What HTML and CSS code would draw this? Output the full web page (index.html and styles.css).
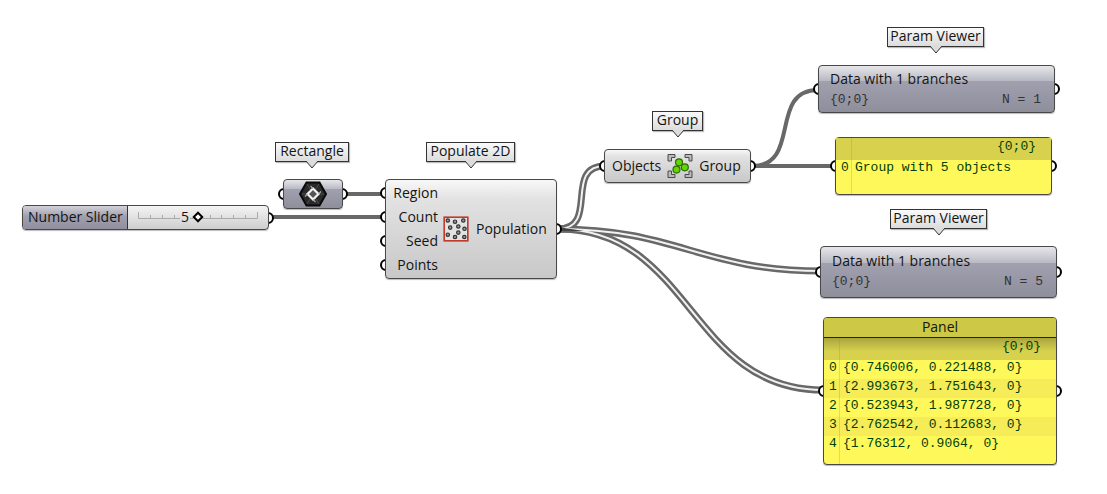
FILE: index.html
```html
<!DOCTYPE html>
<html lang="en">
<head>
<meta charset="utf-8">
<title>Populate 2D definition</title>
<link rel="stylesheet" href="styles.css">
</head>
<body>
<main class="canvas">
  <svg class="wires" aria-hidden="true">
    <g class="single">
      <path d="M344 194H384"/>
      <path d="M270 217H384"/>
      <path d="M752 166H834"/>
      <path d="M752 166C802 166 768 90 818 90"/>
    </g>
    <g class="double">
      <path d="M558 229C600 229 563 166 605 166"/>
      <path d="M558 229C676 229 703 271 821 271"/>
      <path d="M558 229C692 229 689 390 823 390"/>
      <path class="core" d="M558 229C600 229 563 166 605 166"/>
      <path class="core" d="M558 229C676 229 703 271 821 271"/>
      <path class="core" d="M558 229C692 229 689 390 823 390"/>
    </g>
    <path class="joint" d="M558 227L584 231L558 231Z"/>
  </svg>

  <div class="tag tag-rectangle">Rectangle<svg class="tip" viewBox="0 0 14 8"><path d="M1 0L7 7L13 0"/></svg></div>
  <div class="tag tag-populate">Populate 2D<svg class="tip" viewBox="0 0 14 8"><path d="M1 0L7 7L13 0"/></svg></div>
  <div class="tag tag-group">Group<svg class="tip" viewBox="0 0 14 8"><path d="M1 0L7 7L13 0"/></svg></div>
  <div class="tag tag-viewer-a">Param Viewer<svg class="tip" viewBox="0 0 14 8"><path d="M1 0L7 7L13 0"/></svg></div>
  <div class="tag tag-viewer-b">Param Viewer<svg class="tip" viewBox="0 0 14 8"><path d="M1 0L7 7L13 0"/></svg></div>

  <section class="node slider">
    <label class="slider-name" for="count">Number Slider</label>
    <div class="slider-body">
      <svg class="ticks" viewBox="0 0 120 8" preserveAspectRatio="none" aria-hidden="true"><path d="M0.500 1V7.500H119.500V1M12.500 4V7M24.500 4V7M36.500 4V7M72.500 4V7M83.500 4V7M95.500 4V7M107.500 4V7"/></svg>
      <output class="slider-value" for="count">5</output>
      <input id="count" type="range" min="0" max="10" value="5">
    </div>
    <i class="port out"></i>
  </section>

  <section class="node param rectangle">
    <i class="port in"></i>
    <svg width="28" height="26" viewBox="0 0 28 26" role="img" aria-label="Rectangle parameter">
      <path d="M7.500 1.500H20.500L27 13L20.500 24.500H7.500L1 13Z" fill="#2a2a2a" stroke="#0a0a0a" stroke-width="2"/>
      <path d="M8 3L20 23M20 3L8 23M3 13H25" stroke="#4c4c4c" stroke-width="1"/>
      <path d="M14 7.500L19.500 13L14 18.500L8.500 13Z" fill="#555" stroke="#f4f4f4" stroke-width="2.200"/>
      <path d="M14 7.500L11.500 5M14 18.500L16.500 21M19.500 13L22 10.500M8.500 13L6 15.500" stroke="#aaa" stroke-width="1.200"/>
    </svg>
    <i class="port out"></i>
  </section>

  <section class="node component populate">
    <ul class="inputs">
      <li><i class="port in"></i>Region</li>
      <li><i class="port in"></i>Count</li>
      <li><i class="port in"></i>Seed</li>
      <li><i class="port in"></i>Points</li>
    </ul>
    <svg width="26" height="26" viewBox="0 0 26 26" role="img" aria-label="Populate 2D">
      <rect x="2.500" y="2.500" width="23" height="23" fill="#0002"/>
      <rect x="1.200" y="1.200" width="23.600" height="23.600" fill="#e2e2e2" stroke="#c23a2c" stroke-width="1.600"/>
      <g fill="#999" stroke="#333" stroke-width="1.200">
        <circle cx="4.800" cy="4.500" r="1.700"/><circle cx="12" cy="5.700" r="1.700"/><circle cx="20.300" cy="4.500" r="1.700"/>
        <circle cx="7.200" cy="11.600" r="1.700"/><circle cx="15.300" cy="10.500" r="1.700"/><circle cx="21.500" cy="12.800" r="1.700"/>
        <circle cx="15.300" cy="16.600" r="1.700"/><circle cx="4.800" cy="18.700" r="1.700"/><circle cx="12" cy="21" r="1.700"/><circle cx="21.300" cy="21" r="1.700"/>
      </g>
    </svg>
    <span class="output">Population</span>
    <i class="port out"></i>
  </section>

  <section class="node component group">
    <i class="port in"></i>
    <span>Objects</span>
    <svg width="26" height="26" viewBox="0 0 26 26" role="img" aria-label="Group">
      <path d="M1 1.500H8V4.500H4.500V8H1ZM18 1.500H25V8H22V4.500H18ZM1 18H4.500V21.500H8V24.500H1ZM22 18H25V24.500H18V21.500H22Z" fill="#bbb" stroke="#4a4a4a"/>
      <g fill="#62d600" stroke="#2c6b08" stroke-width="1.200"><circle cx="12" cy="9.300" r="3.500"/><circle cx="17.800" cy="14.300" r="3.500"/><circle cx="9.500" cy="16.600" r="3.500"/></g>
    </svg>
    <span>Group</span>
    <i class="port out"></i>
  </section>

  <section class="node param viewer viewer-a">
    <i class="port in"></i>
    <p>Data with 1 branches</p>
    <p class="stats"><span>{0;0}</span><span>N = 1</span></p>
    <i class="port out"></i>
  </section>

  <section class="node panel panel-group">
    <i class="port in"></i>
    <table>
      <thead><tr><th></th><th>{0;0}</th></tr></thead>
      <tbody><tr><td>0</td><td>Group with 5 objects</td></tr></tbody>
    </table>
    <i class="port out"></i>
  </section>

  <section class="node param viewer viewer-b">
    <i class="port in"></i>
    <p>Data with 1 branches</p>
    <p class="stats"><span>{0;0}</span><span>N = 5</span></p>
    <i class="port out"></i>
  </section>

  <section class="node panel panel-points">
    <i class="port in"></i>
    <h2>Panel</h2>
    <table>
      <thead><tr><th></th><th>{0;0}</th></tr></thead>
      <tbody>
        <tr><td>0</td><td>{0.746006, 0.221488, 0}</td></tr>
        <tr><td>1</td><td>{2.993673, 1.751643, 0}</td></tr>
        <tr><td>2</td><td>{0.523943, 1.987728, 0}</td></tr>
        <tr><td>3</td><td>{2.762542, 0.112683, 0}</td></tr>
        <tr><td>4</td><td>{1.76312, 0.9064, 0}</td></tr>
      </tbody>
    </table>
    <i class="port out"></i>
  </section>
</main>
</body>
</html>
```

FILE: styles.css
```css
* { box-sizing: border-box; }

body {
  margin: 0;
  background: #fff;
  color: #141414;
  font: 14px/20px "Open Sans", "Noto Sans", sans-serif;
}

p, h2, ul { margin: 0; padding: 0; }

.canvas {
  position: relative;
  isolation: isolate;
  min-height: 100vh;
  overflow: hidden;
}

/* Wires */
.wires {
  position: absolute;
  inset: 0;
  z-index: -2;
  width: 100%;
  height: 100%;
  fill: none;
}
.single { stroke: #686868; stroke-width: 4; }
.double { stroke: #686868; stroke-width: 7; }
.double .core { stroke: #f2f2f2; stroke-width: 2; }
.joint { fill: #444; }

/* Name tags */
.tag {
  position: absolute;
  height: 20px;
  border: 1px solid #333;
  background: linear-gradient(#fafafa, #dcdcdc);
  box-shadow: 1px 1px 1px #0004;
  line-height: 16px;
  text-align: center;
  white-space: nowrap;
}
.tip {
  position: absolute;
  top: 18px;
  left: calc(50% - 7px);
  width: 14px;
  height: 8px;
  fill: #dcdcdc;
  stroke: #333;
}
.tag-rectangle { left: 275px; top: 142px; width: 74px; }
.tag-populate { left: 426px; top: 142px; width: 89px; }
.tag-group { left: 652px; top: 111px; width: 51px; }
.tag-viewer-a { left: 887px; top: 27px; width: 97px; }
.tag-viewer-b { left: 890px; top: 209px; width: 97px; }

/* Nodes */
.node {
  position: absolute;
  border: 1px solid #484848;
  border-radius: 4px;
  box-shadow: 0 1px 1px #0004;
}
.port {
  position: absolute;
  z-index: -1;
  top: calc(50% - 6px);
  width: 12px;
  height: 12px;
  border: 2px solid #000;
  border-radius: 50%;
  background: #fff;
}
.port.in { left: -6px; }
.port.out { right: -6px; }

.component {
  display: flex;
  align-items: center;
  background: linear-gradient(#f8f8f8, #e2e2e2 20%, #c8c8c8);
}
.param {
  background: linear-gradient(#e6e6ea, #b9b9c4 32%, #a1a0af 32%, #8f8e9b);
}

.slider {
  left: 22px;
  top: 205px;
  width: 247px;
  height: 25px;
  display: flex;
  background: linear-gradient(#f4f4f4, #cecece);
}
.slider-name {
  width: 105px;
  padding-left: 5px;
  border-right: 1px solid #333;
  border-radius: 3px 0 0 3px;
  background: linear-gradient(#d2d2da, #a09fae 45%, #918f9d);
  line-height: 22px;
  white-space: nowrap;
}
.slider-body {
  position: relative;
  flex: 1;
  margin: 0 10px;
}
.ticks {
  position: absolute;
  left: 0;
  top: 5px;
  width: 100%;
  height: 8px;
  fill: none;
  stroke: #aaa;
}
.slider-value {
  position: absolute;
  right: calc(50% + 8px);
  padding: 0 1px;
  background: linear-gradient(#f4f4f4, #cecece);
  line-height: 22px;
}
.slider input {
  position: absolute;
  left: 0;
  top: 6px;
  width: 100%;
  height: 10px;
  margin: 0;
  appearance: none;
  background: none;
}
.slider input::-webkit-slider-thumb {
  appearance: none;
  width: 8px;
  height: 8px;
  border: 2px solid #000;
  background: #fff;
  transform: rotate(45deg);
}

.rectangle {
  left: 283px;
  top: 179px;
  width: 60px;
  height: 30px;
  display: flex;
  align-items: center;
  justify-content: center;
}

.populate {
  left: 385px;
  top: 179px;
  width: 172px;
  height: 100px;
}
.inputs {
  width: 52px;
  margin-right: 5px;
  list-style: none;
  text-align: right;
}
.inputs li { position: relative; line-height: 24px; }
.populate .output { margin-left: 7px; }

.group {
  left: 604px;
  top: 149px;
  width: 147px;
  height: 34px;
  gap: 6px;
  padding-left: 7px;
}

.viewer { padding: 3px 11px; }
.viewer-a { left: 818px; top: 65px; width: 237px; height: 48px; }
.viewer-b { left: 820px; top: 246px; width: 237px; height: 52px; padding-top: 4px; }
.viewer p { line-height: 20px; }
.viewer .stats {
  display: flex;
  justify-content: space-between;
  padding: 1px 2px 0 0;
  color: #333;
  font: 13px/20px "Liberation Mono", monospace;
}

/* Panels */
.panel {
  background: #fff85a;
  color: #00400a;
}
.panel-group { left: 835px; top: 137px; width: 217px; height: 58px; }
.panel-points { left: 823px; top: 317px; width: 234px; height: 148px; }
.panel h2 {
  border-bottom: 1px solid #222;
  border-radius: 3px 3px 0 0;
  background: #cdc846;
  color: #141414;
  font: 14px/18px "Open Sans", "Noto Sans", sans-serif;
  height: 20px;
  text-align: center;
}
.panel::after {
  content: "";
  position: absolute;
  top: 0;
  bottom: 0;
  left: 15px;
  width: 1px;
  background: #8884;
}
.panel-points::after { top: 20px; }
.panel table {
  width: 100%;
  border-spacing: 0;
  font: 13px/18px "Liberation Mono", monospace;
}
.panel th {
  height: 22px;
  padding: 0 15px 4px 0;
  background: #d7d14e;
  font-weight: normal;
  text-align: right;
}
.panel-points th { background: linear-gradient(#aaa53e, #d7d14e 60%); }
.panel td { height: 19px; padding: 0 0 4px 3px; line-height: 15px; }
.panel td:first-child { width: 16px; padding-left: 5px; }
.panel tbody tr:nth-child(even) { background: #f5ec58; }
```
